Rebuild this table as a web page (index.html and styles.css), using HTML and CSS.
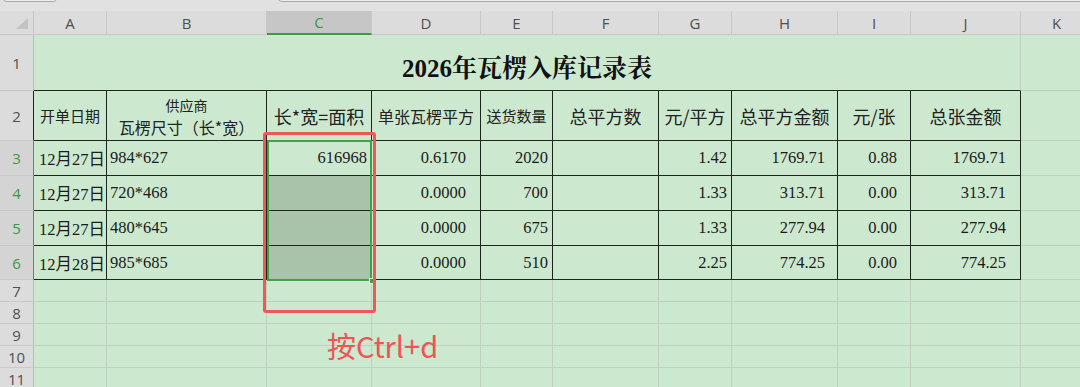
FILE: index.html
```html
<!DOCTYPE html>
<html lang="zh-CN">
<head>
<meta charset="utf-8">
<title>2026年瓦楞入库记录表</title>
<link rel="stylesheet" href="styles.css">
</head>
<body>
<div class="app">
  <div class="topbar">
    <div class="namebox"></div>
    <div class="fxbox"></div>
  </div>
  <div class="sheet">
    <div class="grid">
      <div class="corner"><svg width="34" height="24" viewBox="0 0 34 24"><polygon points="16,18 28,18 28,7" fill="#c3c3c3"/></svg></div>
      <div class="ch">A</div>
      <div class="ch">B</div>
      <div class="ch ch-sel">C</div>
      <div class="ch">D</div>
      <div class="ch">E</div>
      <div class="ch">F</div>
      <div class="ch">G</div>
      <div class="ch">H</div>
      <div class="ch">I</div>
      <div class="ch">J</div>
      <div class="ch">K</div>

      <div class="rh">1</div>
      <div class="c title">2026年瓦楞入库记录表</div>
      <div class="c"></div>

      <div class="rh rh-edge">2</div>
      <div class="c t hd fs15">开单日期</div>
      <div class="c t hd hd-two"><span class="line fs14">供应商</span><span class="line fs16">瓦楞尺寸（长*宽）</span></div>
      <div class="c t hd fs18">长*宽=面积</div>
      <div class="c t hd fs16">单张瓦楞平方</div>
      <div class="c t hd fs15">送货数量</div>
      <div class="c t hd fs18">总平方数</div>
      <div class="c t hd fs18">元/平方</div>
      <div class="c t hd fs18">总平方金额</div>
      <div class="c t hd fs18">元/张</div>
      <div class="c t hd fs18">总张金额</div>
      <div class="c"></div>

      <div class="rh rh-sel">3</div>
      <div class="c t date">12月27日</div>
      <div class="c t size">984*627</div>
      <div class="c t area">616968</div>
      <div class="c t unit">0.6170</div>
      <div class="c t qty">2020</div>
      <div class="c t"></div>
      <div class="c t ppsq">1.42</div>
      <div class="c t amt">1769.71</div>
      <div class="c t pps">0.88</div>
      <div class="c t sum">1769.71</div>
      <div class="c"></div>

      <div class="rh rh-sel">4</div>
      <div class="c t date">12月27日</div>
      <div class="c t size">720*468</div>
      <div class="c t area fill"></div>
      <div class="c t unit">0.0000</div>
      <div class="c t qty">700</div>
      <div class="c t"></div>
      <div class="c t ppsq">1.33</div>
      <div class="c t amt">313.71</div>
      <div class="c t pps">0.00</div>
      <div class="c t sum">313.71</div>
      <div class="c"></div>

      <div class="rh rh-sel">5</div>
      <div class="c t date">12月27日</div>
      <div class="c t size">480*645</div>
      <div class="c t area fill"></div>
      <div class="c t unit">0.0000</div>
      <div class="c t qty">675</div>
      <div class="c t"></div>
      <div class="c t ppsq">1.33</div>
      <div class="c t amt">277.94</div>
      <div class="c t pps">0.00</div>
      <div class="c t sum">277.94</div>
      <div class="c"></div>

      <div class="rh rh-sel">6</div>
      <div class="c t date">12月28日</div>
      <div class="c t size">985*685</div>
      <div class="c t area fill"></div>
      <div class="c t unit">0.0000</div>
      <div class="c t qty">510</div>
      <div class="c t"></div>
      <div class="c t ppsq">2.25</div>
      <div class="c t amt">774.25</div>
      <div class="c t pps">0.00</div>
      <div class="c t sum">774.25</div>
      <div class="c"></div>

      <div class="rh">7</div>
      <div class="c"></div><div class="c"></div><div class="c"></div><div class="c"></div><div class="c"></div><div class="c"></div><div class="c"></div><div class="c"></div><div class="c"></div><div class="c"></div><div class="c"></div>
      <div class="rh">8</div>
      <div class="c"></div><div class="c"></div><div class="c"></div><div class="c"></div><div class="c"></div><div class="c"></div><div class="c"></div><div class="c"></div><div class="c"></div><div class="c"></div><div class="c"></div>
      <div class="rh">9</div>
      <div class="c"></div><div class="c"></div><div class="c"></div><div class="c"></div><div class="c"></div><div class="c"></div><div class="c"></div><div class="c"></div><div class="c"></div><div class="c"></div><div class="c"></div>
      <div class="rh">10</div>
      <div class="c"></div><div class="c"></div><div class="c"></div><div class="c"></div><div class="c"></div><div class="c"></div><div class="c"></div><div class="c"></div><div class="c"></div><div class="c"></div><div class="c"></div>
      <div class="rh">11</div>
      <div class="c"></div><div class="c"></div><div class="c"></div><div class="c"></div><div class="c"></div><div class="c"></div><div class="c"></div><div class="c"></div><div class="c"></div><div class="c"></div><div class="c"></div>
    </div>

    <div class="selection"><span class="handle"></span></div>
    <div class="annot-box"></div>
    <div class="annot-text">按Ctrl+d</div>
  </div>
</div>
</body>
</html>
```

FILE: styles.css
```css
* {
  box-sizing: border-box;
  margin: 0;
  padding: 0;
}

html, body {
  width: 1080px;
  height: 387px;
  overflow: hidden;
  background: #cce8cf;
}

body {
  font-family: "Liberation Serif", "Noto Sans CJK SC", serif;
  color: #1b1b1b;
}

.app {
  width: 1080px;
  height: 387px;
  overflow: hidden;
}

/* top toolbar remnants */
.topbar {
  height: 11px;
  background: #e1e1e1;
  display: flex;
  padding-left: 2px;
  gap: 219px;
  overflow: hidden;
}

.namebox,
.fxbox {
  height: 13px;
  margin-top: -11px;
  border: 1px solid #a8a8a8;
  border-radius: 5px;
  background: #ececec;
}

.namebox { width: 56px; }
.fxbox { flex: 1; margin-right: -10px; }

/* sheet */
.sheet {
  position: relative;
  width: 1093px;
}

.grid {
  display: grid;
  grid-template-columns: 34px 73px 160px 105px 109px 72px 106px 73px 106px 73px 110px 72px;
  grid-template-rows: 24px 56px 50px 35px 35px 35px 34px 22px 22px 22px 22px 22px;
  width: 1093px;
}

.corner {
  background: #dcdcdc;
  border-right: 1px solid #c6c6c6;
  border-bottom: 1px solid #c6c6c6;
}

.corner svg { display: block; }

.ch {
  background: #dcdcdc;
  border-right: 1px solid #c8c8c8;
  border-bottom: 1px solid #c8c8c8;
  font-family: "Open Sans", "Liberation Sans", sans-serif;
  font-size: 15px;
  color: #4f4f4f;
  display: flex;
  align-items: center;
  justify-content: center;
}

.ch-sel {
  background: #c6c6c6;
  color: #3f953f;
  border-bottom: 2px solid #3f9a3f;
}

.rh {
  background: #dcdcdc;
  border-right: 1px solid #bdbdbd;
  border-bottom: 1px solid #c9c9c9;
  font-family: "Open Sans", "Liberation Sans", sans-serif;
  font-size: 15px;
  color: #505050;
  display: flex;
  align-items: center;
  justify-content: center;
}

.rh-edge { border-right-color: #1c261c; }

.rh-sel {
  background: #d4d4d4;
  color: #3f953f;
  border-right-color: #45a045;
}

.c {
  border-right: 1px solid #bcd2be;
  border-bottom: 1px solid #bcd2be;
}

.title {
  grid-column: span 10;
  border-right-color: #bcd2be;
  border-bottom-color: #1c261c;
  display: flex;
  align-items: center;
  justify-content: center;
  padding-top: 6px;
  font-family: "Liberation Serif", "Noto Serif CJK SC", "Noto Sans CJK SC", serif;
  font-weight: bold;
  font-size: 25px;
  color: #111;
  white-space: nowrap;
}

.t {
  border-right-color: #1c261c;
  border-bottom-color: #1c261c;
  display: flex;
  align-items: center;
  font-size: 16.5px;
  white-space: nowrap;
}

.hd {
  justify-content: center;
  text-align: center;
  font-family: "Noto Sans CJK SC", sans-serif;
  color: #222;
}

.hd-two {
  flex-direction: column;
}

.hd-two .line {
  display: block;
  line-height: 22px;
}

.fs14 { font-size: 14px; }
.fs15 { font-size: 15px; }
.fs16 { font-size: 16px; }
.fs18 { font-size: 18px; }

.date { padding-left: 5px; }
.size { padding-left: 3px; }
.area { justify-content: flex-end; padding-right: 4px; }
.unit { justify-content: flex-end; padding-right: 14px; }
.qty  { justify-content: flex-end; padding-right: 4px; }
.ppsq { justify-content: flex-end; padding-right: 4px; }
.amt  { justify-content: flex-end; padding-right: 12px; }
.pps  { justify-content: flex-end; padding-right: 13px; }
.sum  { justify-content: flex-end; padding-right: 14px; }

.fill { background: #a9c3ab; }

/* selection overlay C3:C6 */
.selection {
  position: absolute;
  left: 267px;
  top: 129px;
  width: 105px;
  height: 141px;
  border: 2px solid #45a045;
  pointer-events: none;
}

.handle {
  position: absolute;
  right: -5px;
  bottom: -5px;
  width: 6px;
  height: 6px;
  background: #45a045;
  border: 1px solid #e6f3e6;
}

/* red annotation */
.annot-box {
  position: absolute;
  left: 263px;
  top: 121px;
  width: 113px;
  height: 181px;
  border: 3px solid #ef5858;
  border-radius: 3px;
}

.annot-text {
  position: absolute;
  left: 327px;
  top: 320px;
  font-family: "Noto Sans CJK SC", sans-serif;
  font-size: 29px;
  line-height: 1;
  color: #ef5454;
  white-space: nowrap;
}
```
